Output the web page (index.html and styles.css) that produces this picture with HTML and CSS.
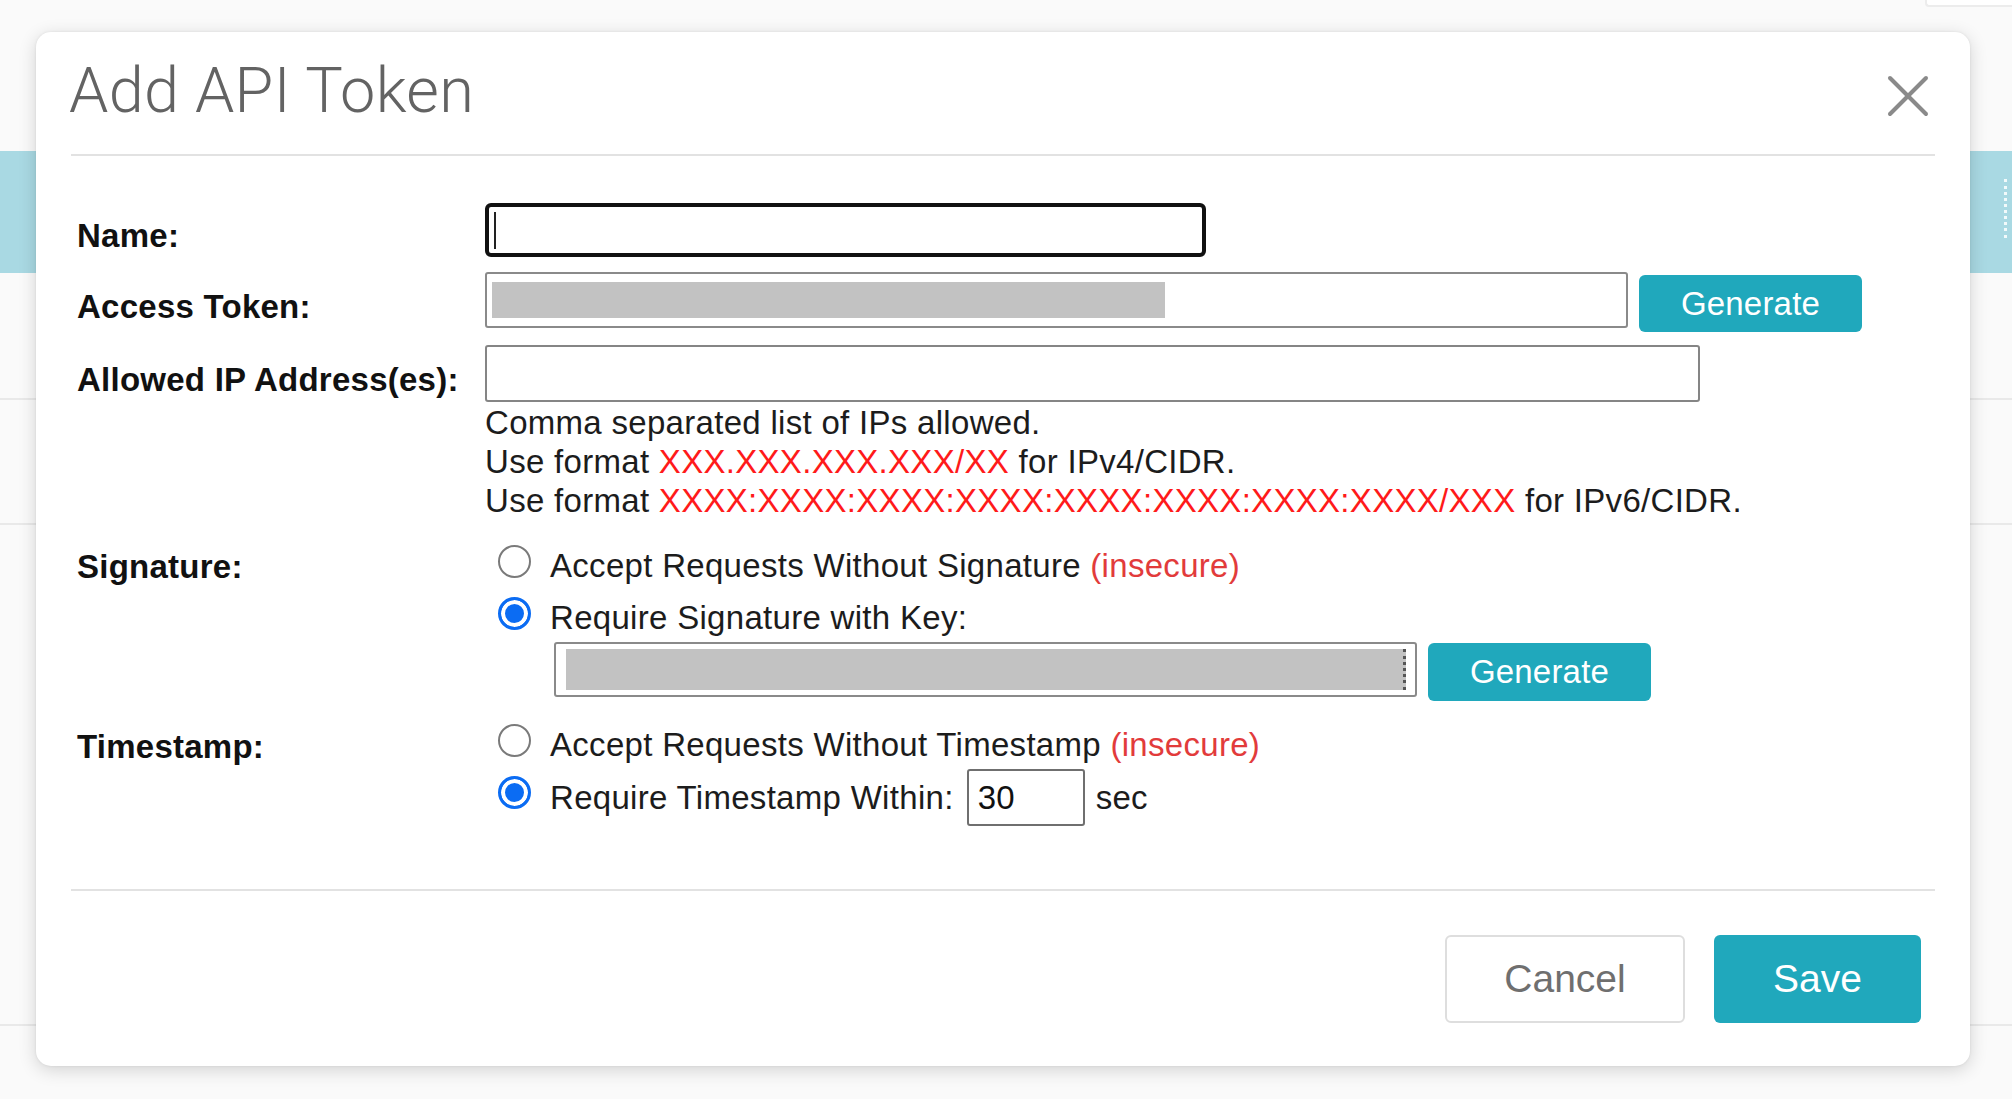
FILE: index.html
```html
<!DOCTYPE html>
<html lang="en">
<head>
<meta charset="utf-8">
<title>Add API Token</title>
<link rel="stylesheet" href="styles.css">
</head>
<body>
<div class="page">
  <div class="page-top"><div class="corner-box"></div></div>
  <div class="band"><div class="band-grip"></div></div>
  <div class="page-row r1"></div>
  <div class="page-row r2"></div>
  <div class="page-row r3"></div>
</div>

<div class="modal" role="dialog">
  <div class="modal-header">
    <h1 class="modal-title">Add API Token</h1>
    <svg class="close" width="42" height="42" viewBox="0 0 42 42" aria-label="Close">
      <line x1="3" y1="3" x2="39" y2="39" stroke="#8a8a8a" stroke-width="4" stroke-linecap="round"/>
      <line x1="39" y1="3" x2="3" y2="39" stroke="#8a8a8a" stroke-width="4" stroke-linecap="round"/>
    </svg>
  </div>

  <div class="modal-body">
    <div class="row row-name">
      <label class="lbl lbl-name">Name:</label>
      <div class="ctl">
        <div class="name-wrap">
          <input class="input input-focus" type="text">
          <span class="caret"></span>
        </div>
      </div>
    </div>

    <div class="row row-token">
      <label class="lbl lbl-token">Access Token:</label>
      <div class="ctl ctl-inline">
        <div class="field field-token"><span class="redact redact-token"></span></div>
        <button class="btn-gen btn-gen-token">Generate</button>
      </div>
    </div>

    <div class="row row-ip">
      <label class="lbl lbl-ip">Allowed IP Address(es):</label>
      <div class="ctl">
        <input class="input input-ip" type="text">
        <div class="help">
          <div>Comma separated list of IPs allowed.</div>
          <div>Use format <span class="red">XXX.XXX.XXX.XXX/XX</span> for IPv4/CIDR.</div>
          <div>Use format <span class="red">XXXX:XXXX:XXXX:XXXX:XXXX:XXXX:XXXX:XXXX/XXX</span> for IPv6/CIDR.</div>
        </div>
      </div>
    </div>

    <div class="row row-sig">
      <label class="lbl lbl-sig">Signature:</label>
      <div class="ctl">
        <div class="radio-row">
          <input class="radio" type="radio" name="sig">
          <span>Accept Requests Without Signature <span class="insecure">(insecure)</span></span>
        </div>
        <div class="radio-row radio-row-2">
          <input class="radio" type="radio" name="sig" checked>
          <span>Require Signature with Key:</span>
        </div>
        <div class="key-row">
          <div class="field field-key"><span class="redact redact-key"></span></div>
          <button class="btn-gen btn-gen-key">Generate</button>
        </div>
      </div>
    </div>

    <div class="row row-ts">
      <label class="lbl lbl-ts">Timestamp:</label>
      <div class="ctl">
        <div class="radio-row">
          <input class="radio" type="radio" name="ts">
          <span>Accept Requests Without Timestamp <span class="insecure">(insecure)</span></span>
        </div>
        <div class="radio-row radio-row-ts">
          <input class="radio" type="radio" name="ts" checked>
          <span>Require Timestamp Within:</span>
          <input class="input input-sec" type="text" value="30">
          <span class="sec">sec</span>
        </div>
      </div>
    </div>
  </div>

  <div class="modal-footer">
    <button class="btn btn-cancel">Cancel</button>
    <button class="btn btn-save">Save</button>
  </div>
</div>
</body>
</html>
```

FILE: styles.css
```css
* { box-sizing: border-box; }

html, body {
  margin: 0;
  padding: 0;
}

body {
  width: 2012px;
  height: 1099px;
  overflow: hidden;
  background: #fafafa;
  font-family: "Liberation Sans", Arial, sans-serif;
  color: #1c1c1c;
  position: relative;
}

/* background page */
.page {
  display: flex;
  flex-direction: column;
  height: 1099px;
}
.page-top {
  height: 151px;
  display: flex;
  justify-content: flex-end;
}
.corner-box {
  width: 87px;
  height: 7px;
  border-left: 2px solid #ececec;
  border-bottom: 2px solid #ececec;
  background: #fff;
  border-bottom-left-radius: 4px;
}
.band {
  height: 122px;
  background: #a9d9e3;
  display: flex;
  justify-content: flex-end;
  align-items: flex-start;
}
.band-grip {
  width: 3px;
  height: 59px;
  margin-top: 28px;
  margin-right: 5px;
  border-right: 3px dotted rgba(255,255,255,0.85);
}
.page-row {
  border-bottom: 2px solid #e9e9e9;
}
.r1 { height: 127px; }
.r2 { height: 125px; }
.r3 { height: 501px; }

/* modal */
.modal {
  position: absolute;
  left: 36px;
  top: 32px;
  width: 1934px;
  height: 1034px;
  background: #fff;
  border-radius: 15px;
  box-shadow: 0 4px 18px rgba(0,0,0,0.16), 0 0 3px rgba(0,0,0,0.08);
}

.modal-header {
  margin: 0 35px;
  padding: 22px 0 26px;
  border-bottom: 2px solid #e2e2e2;
  display: flex;
  justify-content: space-between;
  align-items: flex-start;
}
.modal-title {
  margin: 0 0 0 -2px;
  font-family: Roboto, "Liberation Sans", sans-serif;
  font-weight: 300;
  font-size: 63px;
  line-height: 74px;
  color: #636363;
  letter-spacing: 0.3px;
}
.close {
  display: block;
  margin-top: 21px;
  margin-right: 6px;
}

.modal-body {
  padding: 47px 35px 0 41px;
}

.row {
  display: grid;
  grid-template-columns: 408px 1fr;
  align-items: start;
}
.lbl {
  font-weight: bold;
  font-size: 33px;
  line-height: 40px;
  color: #111;
  white-space: nowrap;
  letter-spacing: 0.25px;
}
.lbl-name { padding-top: 13px; }
.lbl-token { padding-top: 15px; }
.lbl-ip { padding-top: 15px; }
.lbl-sig { padding-top: 1px; }
.lbl-ts { padding-top: 2px; }

.ctl {
  font-size: 33px;
  line-height: 40px;
  letter-spacing: 0.3px;
}
.ctl-inline {
  display: flex;
  align-items: flex-start;
}

.input {
  font-family: "Liberation Sans", Arial, sans-serif;
  font-size: 33px;
  color: #111;
  border: 2px solid #858585;
  border-radius: 3px;
  background: #fff;
  outline: none;
  margin: 0;
  display: block;
}

.name-wrap {
  position: relative;
  width: 721px;
  height: 54px;
}
.input-focus {
  width: 721px;
  height: 54px;
  border: 4px solid #111;
  border-radius: 6px;
}
.caret {
  position: absolute;
  left: 9px;
  top: 9px;
  width: 2px;
  height: 37px;
  background: #222;
}

.row-token { margin-top: 15px; }
.field {
  border: 2px solid #8a8a8a;
  border-radius: 3px;
  background: #fff;
  display: flex;
}
.field-token {
  width: 1143px;
  height: 56px;
  padding: 8px 0 0 5px;
}
.redact {
  display: block;
  background: #c2c2c2;
}
.redact-token {
  width: 673px;
  height: 36px;
}

.btn-gen {
  font-family: "Liberation Sans", Arial, sans-serif;
  font-size: 33px;
  letter-spacing: 0.2px;
  color: #fff;
  background: #20a8bc;
  border: none;
  border-radius: 6px;
  width: 223px;
  padding: 0;
  cursor: pointer;
}
.btn-gen-token {
  height: 57px;
  margin-top: 3px;
  margin-left: 11px;
}

.row-ip { margin-top: 13px; }
.input-ip {
  width: 1215px;
  height: 57px;
}
.help {
  padding-top: 1px;
  line-height: 39px;
  color: #1c1c1c;
}
.red { color: #ff1a1a; }
.insecure { color: #e23b3b; }

.row-sig { margin-top: 26px; }
.radio-row {
  display: flex;
  align-items: center;
  height: 40px;
  white-space: nowrap;
}
.radio-row-2 { margin-top: 12px; }
.radio {
  -webkit-appearance: none;
  appearance: none;
  width: 33px;
  height: 33px;
  margin: -10px 19px 0 13px;
  border: 2px solid #7a7a7a;
  border-radius: 50%;
  background: #fff;
  flex: none;
}
.radio:checked {
  border: 3px solid #0b6cf3;
  background: #0b6cf3;
  box-shadow: inset 0 0 0 4px #fff;
}

.key-row {
  display: flex;
  align-items: flex-start;
  margin-top: 4px;
  margin-left: 69px;
}
.field-key {
  width: 863px;
  height: 55px;
  padding: 5px 0 0 10px;
}
.redact-key {
  width: 840px;
  height: 41px;
  border-right: 3px dotted #555;
}
.btn-gen-key {
  height: 58px;
  margin-top: 1px;
  margin-left: 11px;
}

.row-ts { margin-top: 24px; }
.radio-row-ts {
  margin-top: 4px;
  height: 57px;
}
.input-sec {
  width: 118px;
  height: 57px;
  margin-left: 13px;
  padding: 0 0 0 9px;
  border: 2px solid #6f6f6f;
  letter-spacing: 0.3px;
}
.sec { margin-left: 11px; }

.modal-footer {
  margin: 63px 35px 0;
  border-top: 2px solid #e2e2e2;
  padding: 44px 14px 0 0;
  display: flex;
  justify-content: flex-end;
  gap: 29px;
}
.btn {
  font-family: "Liberation Sans", Arial, sans-serif;
  font-size: 39px;
  height: 88px;
  border-radius: 6px;
  padding: 0;
  cursor: pointer;
}
.btn-cancel {
  width: 240px;
  background: #fff;
  color: #6f6f6f;
  border: 2px solid #dedede;
}
.btn-save {
  width: 207px;
  background: #20a8bc;
  color: #fff;
  border: none;
}
```
